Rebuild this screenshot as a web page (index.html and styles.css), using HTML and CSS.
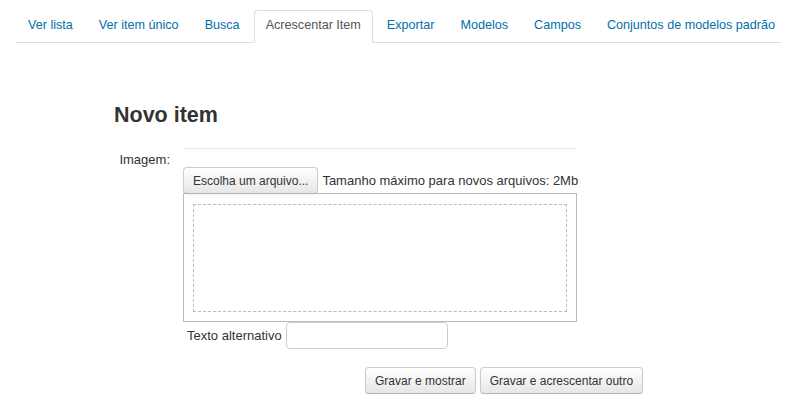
FILE: index.html
```html
<!DOCTYPE html>
<html lang="pt">
<head>
<meta charset="utf-8">
<title>Novo item</title>
<link rel="stylesheet" href="styles.css">
</head>
<body>
<ul class="tabs">
  <li class="tab"><a href="#">Ver lista</a></li>
  <li class="tab"><a href="#">Ver item único</a></li>
  <li class="tab"><a href="#">Busca</a></li>
  <li class="tab active"><a href="#">Acrescentar Item</a></li>
  <li class="tab"><a href="#">Exportar</a></li>
  <li class="tab"><a href="#">Modelos</a></li>
  <li class="tab"><a href="#">Campos</a></li>
  <li class="tab"><a href="#">Conjuntos de modelos padrão</a></li>
</ul>
<main class="content">
  <h2 class="title">Novo item</h2>
  <div class="row">
    <div class="label">Imagem:</div>
    <div class="field">
      <div class="picker-bar">
        <button class="btn">Escolha um arquivo...</button>
        <span class="maxsize">Tamanho máximo para novos arquivos: 2Mb</span>
      </div>
      <div class="dropbox"><div class="dropzone"></div></div>
      <div class="alt-row">
        <label class="alt-label">Texto alternativo</label>
        <input class="alt-input" type="text">
      </div>
    </div>
  </div>
  <div class="actions">
    <button class="btn">Gravar e mostrar</button>
    <button class="btn">Gravar e acrescentar outro</button>
  </div>
</main>
</body>
</html>
```
FILE: styles.css
```css
* { box-sizing: border-box; }
html, body { margin: 0; padding: 0; background: #fff; }
body {
  font-family: "Liberation Sans", Arial, sans-serif;
  font-size: 13px;
  color: #333;
  white-space: nowrap;
}
.tabs {
  list-style: none;
  margin: 0 15px 0 16px;
  padding: 10px 0 0 0;
  display: flex;
  border-bottom: 1px solid #ddd;
  font-size: 12.6px;
}
.tab {
  margin-right: 2px;
  margin-bottom: -1px;
  flex-shrink: 0;
}
.tab a {
  display: block;
  padding: 5px 11px 7px 11px;
  line-height: 19px;
  border: 1px solid transparent;
  border-radius: 4px 4px 0 0;
  color: #0070a8;
  text-decoration: none;
}
.tab.active a {
  color: #555;
  background: #fff;
  border-color: #ddd #ddd transparent #ddd;
}
.content {
  margin-left: 114px;
  width: 463px;
  padding-top: 59px;
}
.title {
  margin: 0 0 20px 0;
  font-size: 21.5px;
  font-weight: bold;
  line-height: 26px;
  color: #333;
}
.row {
  display: flex;
}
.label {
  width: 56px;
  flex-shrink: 0;
  margin-right: 13px;
  text-align: right;
  line-height: 24px;
}
.field {
  width: 394px;
  flex-shrink: 0;
  border-top: 1px solid #e5e5e5;
  padding-top: 18px;
}
.picker-bar {
  display: flex;
  align-items: center;
  gap: 4px;
}
.btn {
  font-family: "Liberation Sans", Arial, sans-serif;
  font-size: 12px;
  color: #333;
  height: 27px;
  padding: 0 9px;
  white-space: nowrap;
  flex-shrink: 0;
  background: linear-gradient(#fff, #e6e6e6);
  border: 1px solid #ccc;
  border-bottom-color: #b3b3b3;
  border-radius: 4px;
  box-shadow: inset 0 1px 0 rgba(255,255,255,.2), 0 1px 2px rgba(0,0,0,.05);
}
.dropbox {
  border: 1px solid #bbb;
  height: 129px;
  margin-top: -1px;
  padding: 10px 9px 9px 9px;
}
.dropzone {
  height: 100%;
  border: 1px dashed #bbb;
}
.alt-row {
  display: flex;
  align-items: center;
  padding-left: 4px;
}
.alt-label {
  margin-right: 4px;
}
.alt-input {
  width: 162px;
  height: 27px;
  border: 1px solid #ccc;
  border-radius: 4px;
  margin: 0;
}
.actions {
  display: flex;
  gap: 4px;
  margin-top: 18px;
  padding-left: 251px;
}
```
